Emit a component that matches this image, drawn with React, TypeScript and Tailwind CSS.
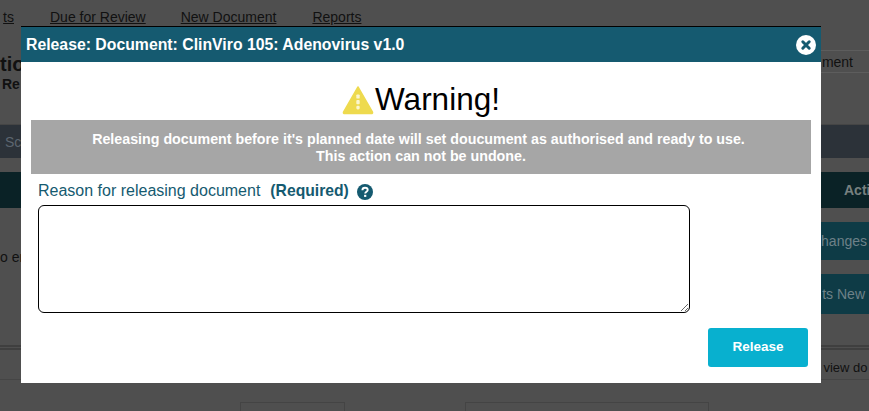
import { useState } from 'react';

const font = { sans: 'font-["Liberation_Sans",Arial,sans-serif]' };

function WarningIcon() {
  return (
    <svg width="34" height="30" viewBox="0 0 34 32" className="mb-[4px] -ml-[1px] shrink-0">
      <path d="M17 2 L32.5 29 Q33 30.5 31 30.5 L3 30.5 Q1 30.5 1.5 29 Z" fill="#eeda4e" stroke="#eeda4e" strokeWidth="1.5" strokeLinejoin="round" />
      <rect x="15.2" y="10" width="3.6" height="4.5" rx="1" fill="#fbf6cf" />
      <rect x="15.2" y="16" width="3.6" height="4.5" rx="1" fill="#fbf6cf" />
      <rect x="15.2" y="22" width="3.6" height="4" rx="1.5" fill="#fbf6cf" />
    </svg>
  );
}

function CloseIcon() {
  return (
    <svg width="20" height="20" viewBox="0 0 20 20">
      <circle cx="10" cy="10" r="10" fill="#ffffff" />
      <path d="M6.8 6.8 L13.2 13.2 M13.2 6.8 L6.8 13.2" stroke="#155a70" strokeWidth="3" strokeLinecap="round" />
    </svg>
  );
}

function HelpIcon() {
  return (
    <svg width="16" height="16" viewBox="0 0 16 16">
      <circle cx="8" cy="8" r="8" fill="#155a70" />
      <path d="M5.4 6.2 C5.4 4.6 6.6 3.7 8 3.7 C9.5 3.7 10.7 4.6 10.7 6 C10.7 7.7 8.2 7.8 8.2 9.5" fill="none" stroke="#ffffff" strokeWidth="1.9" />
      <rect x="7.1" y="10.8" width="2.2" height="2.1" fill="#ffffff" />
    </svg>
  );
}

export default function App() {
  const [reason, setReason] = useState('');

  return (
    <div className={`relative h-[411px] w-[869px] overflow-hidden bg-[#4f4f4f] ${font.sans}`}>
      {/* Dimmed page behind the dialog */}
      <div className="flex h-full flex-col text-sm text-[#111]">
        <div className="flex h-[50px] shrink-0 items-start pt-[7px]">
          <div className="flex w-[14px] justify-end underline">ts</div>
          <div className="ml-[36px] flex underline">
            <span>Due for Review</span>
            <span className="ml-[35px]">New Document</span>
            <span className="ml-[36px]">Reports</span>
          </div>
          <div className="ml-auto mt-[43px] flex h-[23px] w-[130px] items-center justify-end border-y border-[#5d5d5d] pr-[16px]">
            <span>ment</span>
          </div>
        </div>
        <div className="flex h-[75px] shrink-0 flex-col border-b border-[#454545]">
          <div className="h-[24px] text-xl font-bold">tio</div>
          <div className="pl-[2px] font-bold">Re</div>
        </div>
        <div className="flex h-[33px] shrink-0 items-center bg-[#2c3239] pl-[5px] text-sm text-[#5d6670]">Sc</div>
        <div className="h-[14px] shrink-0" />
        <div className="flex h-[36px] shrink-0 items-center justify-end bg-[#0a2226] text-sm font-bold text-[#77807f]">
          <span className="w-[25px] whitespace-nowrap">Acti</span>
        </div>
        <div className="flex h-[142px] shrink-0 justify-between border-b-[5px] border-double border-[#3f3f3f] pt-[14px]">
          <div className="whitespace-nowrap pt-[25px]">o en</div>
          <div className="flex w-[100px] flex-col gap-[14px]">
            <div className="flex h-[38px] items-center justify-end whitespace-nowrap bg-[#0e3b46] pr-[2px] text-[#6d8188]">hanges</div>
            <div className="flex h-[40px] items-center justify-end whitespace-nowrap bg-[#0e3b46] pr-[4px] text-[#6d8188]">ts New</div>
          </div>
        </div>
        <div className="flex h-[30px] shrink-0 items-center justify-end border-b border-[#454545] pt-[8px] text-[13px]">
          <span className="w-[60px] whitespace-nowrap">to view do</span>
        </div>
        <div className="flex shrink-0 pl-[240px] pt-[22px]">
          <div className="h-[20px] w-[105px] border border-[#444]" />
          <div className="ml-[120px] h-[20px] w-[244px] border border-[#444]" />
        </div>
      </div>

      {/* Release dialog */}
      <div className="absolute left-[21px] top-[26px] flex h-[357px] w-[800px] flex-col border-t border-black bg-white">
        <div className="flex h-[35px] items-center justify-between bg-[#155a70] px-[5px] text-[15.8px] font-bold text-white">
          <span>Release: Document: ClinViro 105: Adenovirus v1.0</span>
          <CloseIcon />
        </div>
        <div className="flex h-[58px] items-end justify-center pb-[1px] text-[31.5px] leading-[40px] text-black">
          <WarningIcon />
          <span>Warning!</span>
        </div>
        <div className="mx-[10px] flex h-[54px] flex-col items-center justify-center bg-[#a6a6a6] pt-[2px] text-[14.25px] font-bold leading-[17px] text-white">
          <span className="mr-[5px]">Releasing document before it's planned date will set doucument as authorised and ready to use.</span>
          <span>This action can not be undone.</span>
        </div>
        <div className="mt-[5px] flex items-center pl-[17px] text-base text-[#155a70]">
          <span>Reason for releasing document</span>
          <span className="ml-[10px] text-[15.7px] font-bold">(Required)</span>
          <span className="ml-[8px] mt-[2px]"><HelpIcon /></span>
        </div>
        <textarea
          value={reason}
          onChange={(e) => setReason(e.target.value)}
          className="ml-[17px] mt-[2px] h-[108px] w-[652px] rounded-[6px] border border-black outline-none"
        />
        <div className="flex justify-end pr-[13px] pt-[15px]">
          <button className="h-[39px] w-[100px] rounded-[3px] bg-[#08b0cf] text-[13.5px] font-bold text-white">Release</button>
        </div>
      </div>
    </div>
  );
}
